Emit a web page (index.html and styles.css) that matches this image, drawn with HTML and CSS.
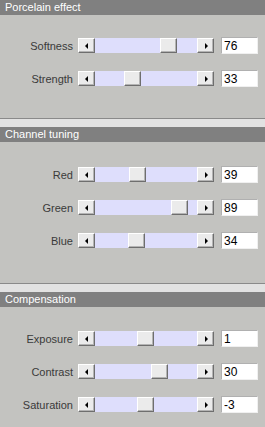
FILE: index.html
```html
<!DOCTYPE html>
<html lang="en">
<head>
    <meta charset="UTF-8">
    <title>Porcelain effect</title>
    <link rel="stylesheet" href="styles.css">
</head>
<body>
    <div class="section first">
        <div class="head">Porcelain effect</div>
        <div class="rows">
            <div class="row">
                <span class="label">Softness</span>
                <div class="slider"><span class="btn left"></span><div class="track"><span class="thumb" style="left:65px"></span></div><span class="btn right"></span></div>
                <input class="value" type="text" value="76">
            </div>
            <div class="row">
                <span class="label">Strength</span>
                <div class="slider"><span class="btn left"></span><div class="track"><span class="thumb" style="left:29px"></span></div><span class="btn right"></span></div>
                <input class="value" type="text" value="33">
            </div>
        </div>
    </div>

    <div class="section second">
        <div class="head">Channel tuning</div>
        <div class="rows">
            <div class="row">
                <span class="label">Red</span>
                <div class="slider"><span class="btn left"></span><div class="track"><span class="thumb" style="left:34px"></span></div><span class="btn right"></span></div>
                <input class="value" type="text" value="39">
            </div>
            <div class="row">
                <span class="label">Green</span>
                <div class="slider"><span class="btn left"></span><div class="track"><span class="thumb" style="left:76px"></span></div><span class="btn right"></span></div>
                <input class="value" type="text" value="89">
            </div>
            <div class="row">
                <span class="label">Blue</span>
                <div class="slider"><span class="btn left"></span><div class="track"><span class="thumb" style="left:33px"></span></div><span class="btn right"></span></div>
                <input class="value" type="text" value="34">
            </div>
        </div>
    </div>

    <div class="section third">
        <div class="head">Compensation</div>
        <div class="rows">
            <div class="row">
                <span class="label">Exposure</span>
                <div class="slider"><span class="btn left"></span><div class="track"><span class="thumb" style="left:42px"></span></div><span class="btn right"></span></div>
                <input class="value" type="text" value="1">
            </div>
            <div class="row">
                <span class="label">Contrast</span>
                <div class="slider"><span class="btn left"></span><div class="track"><span class="thumb" style="left:56px"></span></div><span class="btn right"></span></div>
                <input class="value" type="text" value="30">
            </div>
            <div class="row">
                <span class="label">Saturation</span>
                <div class="slider"><span class="btn left"></span><div class="track"><span class="thumb" style="left:42px"></span></div><span class="btn right"></span></div>
                <input class="value" type="text" value="-3">
            </div>
        </div>
    </div>
</body>
</html>
```
FILE: styles.css
```css
body {
    margin: 0;
    background-color: #c3c3c0;
    font-family: "Liberation Sans", Arial, sans-serif;
    height: 427px;
    overflow: hidden;
}

.section {
    border-top: 1px solid #8a8a8a;
    padding-top: 8px;
    background: linear-gradient(#e2e2e2, #e2e2e2) top / 100% 8px no-repeat;
}

.section.first {
    border-top: none;
    padding-top: 0;
}

.head {
    height: 15px;
    line-height: 15px;
    background-color: #808080;
    color: #ffffff;
    font-size: 11px;
    padding-left: 5px;
}

.rows {
    display: flex;
    flex-direction: column;
    gap: 16px;
    background-color: #c3c3c0;
}

.first .rows {
    padding: 22px 0 31px;
}

.second .rows {
    padding: 24px 0 34px;
}

.third .rows {
    padding: 23px 0 0;
}

.row {
    display: flex;
    align-items: center;
    height: 17px;
}

.label {
    width: 73px;
    text-align: right;
    font-size: 11px;
    color: #3a3a3a;
    margin-right: 5px;
}

.slider {
    display: flex;
    width: 136px;
    height: 15px;
}

.btn, .thumb {
    box-sizing: border-box;
    width: 17px;
    height: 15px;
    background-color: #ebebeb;
    border: 1px solid;
    border-color: #ffffff #6e6e6e #6e6e6e #ffffff;
    box-shadow: inset -1px -1px 0 #b4b4b4;
    position: relative;
}

.btn::after {
    content: "";
    position: absolute;
    top: 4px;
    width: 0;
    height: 0;
    border-top: 3px solid transparent;
    border-bottom: 3px solid transparent;
}

.btn.left::after {
    left: 6px;
    border-right: 3px solid #000000;
}

.btn.right::after {
    left: 7px;
    border-left: 3px solid #000000;
}

.track {
    position: relative;
    width: 102px;
    height: 15px;
    background-color: #dedefc;
}

.thumb {
    position: absolute;
    top: 0;
    display: block;
}

.value {
    box-sizing: border-box;
    width: 37px;
    height: 17px;
    margin: 0 0 0 7px;
    padding: 0 2px;
    border: 1px solid #e4e4e4;
    border-color: #b0b0b0 #f0f0f0 #f0f0f0 #b0b0b0;
    background-color: #ffffff;
    font-family: "Liberation Sans", Arial, sans-serif;
    font-size: 12px;
    color: #000000;
    outline: none;
}
```
